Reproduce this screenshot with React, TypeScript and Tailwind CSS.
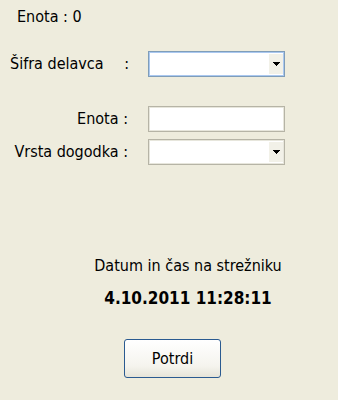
import React from "react";

function Arrow() {
  return (
    <svg width="7" height="4" viewBox="0 0 7 4" className="block">
      <path d="M0 0H7V1H6V2H5V3H4V4H3V3H2V2H1V1H0Z" fill="#000" />
    </svg>
  );
}

function Combo({ focused }: { focused?: boolean }) {
  return (
    <div
      className={
        "w-[137px] h-[26px] bg-white flex justify-end items-stretch " +
        (focused
          ? "border border-[#7f9db9] shadow-[inset_0_0_0_1px_#aac8f0]"
          : "border border-[#b6b4a6] shadow-[inset_0_0_0_1px_#e7e6dc]")
      }
    >
      <div className="w-[14px] my-[2px] mr-[1px] bg-[#f2f1e8] flex items-center justify-center">
        <Arrow />
      </div>
    </div>
  );
}

export default function App() {
  return (
    <div
      className="w-[338px] h-[400px] bg-[#eeecdd] text-black text-[16px] leading-none relative"
      style={{ fontFamily: "Tahoma, 'DejaVu Sans Condensed', 'Liberation Sans', sans-serif" }}
    >
      <div className="pl-[17px] pt-[9px]">Enota : 0</div>

      <div className="flex items-center mt-[26px] h-[26px]">
        <div className="w-[148px] pl-[10px] pr-[19px] flex justify-between">
          <span>Šifra delavca</span>
          <span>:</span>
        </div>
        <Combo focused />
      </div>

      <div className="flex items-center mt-[29px] h-[26px]">
        <div className="w-[148px] pr-[20px] text-right">Enota :</div>
        <div className="w-[137px] h-[26px] bg-white border border-[#b6b4a6] shadow-[inset_0_0_0_1px_#e7e6dc]" />
      </div>

      <div className="flex items-center mt-[7px] h-[26px]">
        <div className="w-[148px] pr-[20px] text-right">Vrsta dogodka :</div>
        <Combo />
      </div>

      <div className="mt-[93px] text-center pl-[38px]">Datum in čas na strežniku</div>
      <div className="mt-[16px] text-center pl-[38px] font-bold text-[17px]">4.10.2011 11:28:11</div>

      <div className="mt-[32px] pl-[124px]">
        <button className="w-[97px] h-[39px] rounded-[3px] border border-[#2a5a90] bg-[linear-gradient(#ffffff,#f5f4ee_70%,#e6e4d8)] text-[16px]">
          Potrdi
        </button>
      </div>
    </div>
  );
}
